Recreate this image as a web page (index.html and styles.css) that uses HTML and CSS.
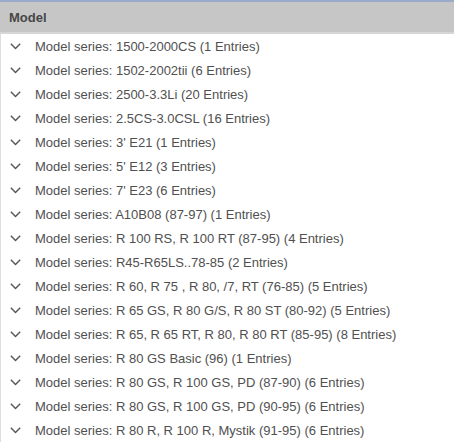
FILE: index.html
```html
<!DOCTYPE html>
<html>
<head>
<meta charset="utf-8">
<link rel="stylesheet" href="styles.css">
</head>
<body>
<div class="panel">
  <div class="header">Model</div>
  <ul class="list">
    <li class="row"><span class="chev"><svg width="11" height="7" viewBox="0 0 11 7"><path d="M0.8 0.8 L5.5 5.6 L10.2 0.8" fill="none" stroke="#555" stroke-width="1.4"/></svg></span>Model series: 1500-2000CS (1 Entries)</li>
    <li class="row"><span class="chev"><svg width="11" height="7" viewBox="0 0 11 7"><path d="M0.8 0.8 L5.5 5.6 L10.2 0.8" fill="none" stroke="#555" stroke-width="1.4"/></svg></span>Model series: 1502-2002tii (6 Entries)</li>
    <li class="row"><span class="chev"><svg width="11" height="7" viewBox="0 0 11 7"><path d="M0.8 0.8 L5.5 5.6 L10.2 0.8" fill="none" stroke="#555" stroke-width="1.4"/></svg></span>Model series: 2500-3.3Li (20 Entries)</li>
    <li class="row"><span class="chev"><svg width="11" height="7" viewBox="0 0 11 7"><path d="M0.8 0.8 L5.5 5.6 L10.2 0.8" fill="none" stroke="#555" stroke-width="1.4"/></svg></span>Model series: 2.5CS-3.0CSL (16 Entries)</li>
    <li class="row"><span class="chev"><svg width="11" height="7" viewBox="0 0 11 7"><path d="M0.8 0.8 L5.5 5.6 L10.2 0.8" fill="none" stroke="#555" stroke-width="1.4"/></svg></span>Model series: 3' E21 (1 Entries)</li>
    <li class="row"><span class="chev"><svg width="11" height="7" viewBox="0 0 11 7"><path d="M0.8 0.8 L5.5 5.6 L10.2 0.8" fill="none" stroke="#555" stroke-width="1.4"/></svg></span>Model series: 5' E12 (3 Entries)</li>
    <li class="row"><span class="chev"><svg width="11" height="7" viewBox="0 0 11 7"><path d="M0.8 0.8 L5.5 5.6 L10.2 0.8" fill="none" stroke="#555" stroke-width="1.4"/></svg></span>Model series: 7' E23 (6 Entries)</li>
    <li class="row"><span class="chev"><svg width="11" height="7" viewBox="0 0 11 7"><path d="M0.8 0.8 L5.5 5.6 L10.2 0.8" fill="none" stroke="#555" stroke-width="1.4"/></svg></span>Model series: A10B08 (87-97) (1 Entries)</li>
    <li class="row"><span class="chev"><svg width="11" height="7" viewBox="0 0 11 7"><path d="M0.8 0.8 L5.5 5.6 L10.2 0.8" fill="none" stroke="#555" stroke-width="1.4"/></svg></span>Model series: R 100 RS, R 100 RT (87-95) (4 Entries)</li>
    <li class="row"><span class="chev"><svg width="11" height="7" viewBox="0 0 11 7"><path d="M0.8 0.8 L5.5 5.6 L10.2 0.8" fill="none" stroke="#555" stroke-width="1.4"/></svg></span>Model series: R45-R65LS..78-85 (2 Entries)</li>
    <li class="row"><span class="chev"><svg width="11" height="7" viewBox="0 0 11 7"><path d="M0.8 0.8 L5.5 5.6 L10.2 0.8" fill="none" stroke="#555" stroke-width="1.4"/></svg></span>Model series: R 60, R 75 , R 80, /7, RT (76-85) (5 Entries)</li>
    <li class="row"><span class="chev"><svg width="11" height="7" viewBox="0 0 11 7"><path d="M0.8 0.8 L5.5 5.6 L10.2 0.8" fill="none" stroke="#555" stroke-width="1.4"/></svg></span>Model series: R 65 GS, R 80 G/S, R 80 ST (80-92) (5 Entries)</li>
    <li class="row"><span class="chev"><svg width="11" height="7" viewBox="0 0 11 7"><path d="M0.8 0.8 L5.5 5.6 L10.2 0.8" fill="none" stroke="#555" stroke-width="1.4"/></svg></span>Model series: R 65, R 65 RT, R 80, R 80 RT (85-95) (8 Entries)</li>
    <li class="row"><span class="chev"><svg width="11" height="7" viewBox="0 0 11 7"><path d="M0.8 0.8 L5.5 5.6 L10.2 0.8" fill="none" stroke="#555" stroke-width="1.4"/></svg></span>Model series: R 80 GS Basic (96) (1 Entries)</li>
    <li class="row"><span class="chev"><svg width="11" height="7" viewBox="0 0 11 7"><path d="M0.8 0.8 L5.5 5.6 L10.2 0.8" fill="none" stroke="#555" stroke-width="1.4"/></svg></span>Model series: R 80 GS, R 100 GS, PD (87-90) (6 Entries)</li>
    <li class="row"><span class="chev"><svg width="11" height="7" viewBox="0 0 11 7"><path d="M0.8 0.8 L5.5 5.6 L10.2 0.8" fill="none" stroke="#555" stroke-width="1.4"/></svg></span>Model series: R 80 GS, R 100 GS, PD (90-95) (6 Entries)</li>
    <li class="row"><span class="chev"><svg width="11" height="7" viewBox="0 0 11 7"><path d="M0.8 0.8 L5.5 5.6 L10.2 0.8" fill="none" stroke="#555" stroke-width="1.4"/></svg></span>Model series: R 80 R, R 100 R, Mystik (91-95) (6 Entries)</li>
  </ul>
</div>
</body>
</html>
```

FILE: styles.css
```css
html, body {
  margin: 0;
  padding: 0;
  background: #fff;
}
.panel {
  width: 454px;
  height: 447px;
  overflow: hidden;
  border-top: 2px solid #9aabc9;
  box-sizing: border-box;
  font-family: "Liberation Sans", Arial, sans-serif;
}
.header {
  height: 30px;
  background: #c6c6c6;
  border-bottom: 2px solid #d6d6d6;
  box-sizing: content-box;
  display: flex;
  align-items: center;
  padding-left: 9px;
  font-size: 13px;
  font-weight: bold;
  color: #474747;
}
.list {
  list-style: none;
  margin: 0;
  padding: 0;
  border-left: 1px solid #dedede;
}
.row {
  height: 24px;
  display: flex;
  align-items: center;
  font-size: 13px;
  color: #505050;
  white-space: nowrap;
}
.chev {
  width: 34px;
  display: flex;
  justify-content: flex-start;
  padding-left: 9px;
  box-sizing: border-box;
}
.chev svg {
  display: block;
}
```
